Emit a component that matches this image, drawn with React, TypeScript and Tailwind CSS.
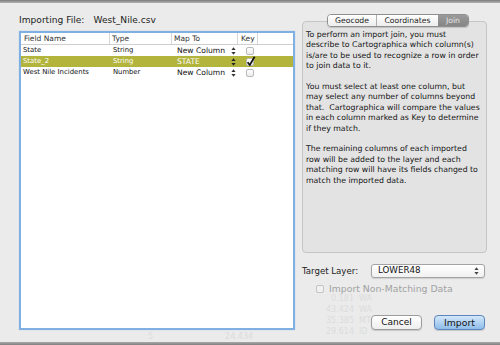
import React from "react";

const UpDown = ({ color = "#333" }: { color?: string }) => (
  <svg width="5" height="8" viewBox="0 0 5 8" className="shrink-0">
    <path d="M2.5 0.3 L4.6 3.1 H0.4 Z M2.5 7.7 L4.6 4.9 H0.4 Z" fill={color} />
  </svg>
);

const Check = ({ checked = false }: { checked?: boolean }) => (
  <div className="relative w-[8px] h-[8px] rounded-[2px] border border-[#b9b9b9] bg-linear-to-b from-white to-[#ececec]">
    {checked && (
      <svg width="10" height="11" viewBox="0 0 10 11" className="absolute -left-[1px] -top-[3px]">
        <path d="M1.6 6.2 L3.8 9 L8.6 0.8" stroke="#111" strokeWidth="1.7" fill="none" />
      </svg>
    )}
  </div>
);

type Row = { name: string; type: string; map: string; key: boolean; sel: boolean };
const rows: Row[] = [
  { name: "State", type: "String", map: "New Column", key: false, sel: false },
  { name: "State_2", type: "String", map: "STATE", key: true, sel: true },
  { name: "West Nile Incidents", type: "Number", map: "New Column", key: false, sel: false },
];

const p1 = [
  "To perform an import join, you must",
  "describe to Cartographica which column(s)",
  "is/are to be used to recognize a row in order",
  "to join data to it.",
];
const p2 = [
  "You must select at least one column, but",
  "may select any number of columns beyond",
  "that.\u00a0 Cartographica will compare the values",
  "in each column marked as Key to determine",
  "if they match.",
];
const p3 = [
  "The remaining columns of each imported",
  "row will be added to the layer and each",
  "matching row will have its fields changed to",
  "match the imported data.",
];

const ghost = [
  ["0.181", "WA", 293],
  ["43.424", "WA", 304],
  ["35.385", "MT", 315],
  ["29.614", "ID", 326],
] as const;

export default function App() {
  return (
    <div className="relative w-[500px] h-[345px] overflow-hidden bg-[#ebebeb] flex flex-col font-['DejaVu_Sans',sans-serif] text-[#1a1a1a]">
      {/* ghost background text seen through the sheet */}
      <div className="absolute inset-0 pointer-events-none text-[8px] text-[#dcdcdc]">
        {ghost.map(([n, s, y]) => (
          <div key={n} className="absolute flex gap-[5px]" style={{ top: y, left: 318 }}>
            <span className="w-[36px] text-right">{n}</span>
            <span>{s}</span>
          </div>
        ))}
        <div className="absolute flex" style={{ top: 331, left: 148 }}>
          <span>5</span>
          <span className="ml-[72px]">24.434</span>
        </div>
      </div>

      <div className="h-[3px] bg-linear-to-b from-[#7c7c7c] to-[#b3b3b3] shrink-0" />

      <div className="relative flex flex-1 pl-[19px]">
        {/* left column */}
        <div className="w-[276px] flex flex-col">
          <div className="mt-[12px] h-[12px] flex items-center text-[9.1px] text-[#222] whitespace-nowrap">
            <span>Importing File:</span>
            <span className="ml-[9px]">West_Nile.csv</span>
          </div>
          <div className="mt-[4px] h-[299px] border-2 border-[#80b0e2] bg-white shadow-[0_0_1px_#a9c9ec] flex flex-col">
            <div className="h-[12px] flex border-b border-[#cfcfcf] text-[7.5px] text-[#333] whitespace-nowrap">
              <div className="w-[89px] pl-[3px] border-r border-[#d6d6d6] flex items-center">Field Name</div>
              <div className="w-[62px] pl-[2px] border-r border-[#d6d6d6] flex items-center">Type</div>
              <div className="w-[66px] pl-[2px] border-r border-[#d6d6d6] flex items-center">Map To</div>
              <div className="w-[20px] pl-[3px] border-r border-[#d6d6d6] flex items-center">Key</div>
              <div className="flex-1" />
            </div>
            {rows.map((r) => (
              <div
                key={r.name}
                className={`h-[11px] flex items-center whitespace-nowrap ${r.sel ? "bg-[#b2b43c] text-white" : "text-[#111]"}`}
              >
                <div className="w-[89px] pl-[2px] text-[6.9px]">{r.name}</div>
                <div className="w-[62px] pl-[3px] text-[6.8px]">{r.type}</div>
                <div className="w-[66px] pl-[5px] pr-[2px] flex items-center justify-between text-[7.6px]">
                  <span>{r.map}</span>
                  <UpDown color={r.sel ? "#222" : "#333"} />
                </div>
                <div className="w-[20px] pl-[8px] flex items-center">
                  <Check checked={r.key} />
                </div>
              </div>
            ))}
          </div>
        </div>

        {/* right column */}
        <div className="ml-[7px] w-[186px] flex flex-col">
          <div className="mt-[11px] relative z-10 flex justify-center">
            <div className="ml-[6px] h-[13px] flex rounded-[4px] border border-[#8f8f8f] overflow-hidden text-[7.7px] shadow-[0_1px_1px_rgba(0,0,0,0.15)]">
              <div className="w-[49px] flex items-center justify-center bg-linear-to-b from-white to-[#ededed] border-r border-[#b0b0b0] text-[#222]">
                Geocode
              </div>
              <div className="w-[61px] flex items-center justify-center bg-linear-to-b from-white to-[#ededed] text-[#222]">
                Coordinates
              </div>
              <div className="w-[30px] flex items-center justify-center bg-linear-to-b from-[#9a9a9a] to-[#858585] text-[#e4e4e4]">
                Join
              </div>
            </div>
          </div>
          <div className="-mt-[6px] w-[185px] h-[232px] rounded-[4px] border border-[#c5c5c5] bg-[#e3e3e3] pt-[8px] pl-[3px] text-[7.8px] leading-[10.4px] text-[#151515] whitespace-nowrap">
            {p1.map((l) => (
              <div key={l}>{l}</div>
            ))}
            <div className="h-[10.4px]" />
            {p2.map((l) => (
              <div key={l}>{l}</div>
            ))}
            <div className="h-[10.4px]" />
            {p3.map((l) => (
              <div key={l}>{l}</div>
            ))}
          </div>

          <div className="mt-[11px] h-[14px] flex items-center">
            <span className="w-[69px] text-[8.6px] text-[#222] whitespace-nowrap">Target Layer:</span>
            <div className="w-[114px] h-[14px] flex items-center justify-between pl-[6px] pr-[5px] rounded-[3px] border border-[#a3a3a3] bg-linear-to-b from-white to-[#f1f1f1] shadow-[0_1px_1px_rgba(0,0,0,0.12)] text-[8.7px] text-[#111]">
              <span>LOWER48</span>
              <UpDown color="#444" />
            </div>
          </div>

          <div className="mt-[6px] h-[10px] pl-[14px] flex items-center gap-[5px]">
            <div className="w-[8px] h-[8px] rounded-[2px] border border-[#c4c4c4] bg-[#f1f1f1]" />
            <span className="text-[9.3px] text-[#a2a2a2] whitespace-nowrap">Import Non-Matching Data</span>
          </div>

          <div className="mt-[21px] h-[15px] pl-[69px] flex gap-[12px]">
            <div className="w-[51px] h-[15px] flex items-center justify-center rounded-[4px] border border-[#9c9c9c] bg-linear-to-b from-white to-[#eeeeee] shadow-[0_1px_1px_rgba(0,0,0,0.15)] text-[9px] text-[#111]">
              Cancel
            </div>
            <div className="w-[51px] h-[15px] flex items-center justify-center rounded-[4px] border border-[#5d86bc] bg-linear-to-b from-[#d4e7fa] to-[#8ebde9] shadow-[0_1px_1px_rgba(0,0,0,0.15)] text-[9.3px] text-[#111]">
              Import
            </div>
          </div>
        </div>
      </div>

      <div className="h-[3px] bg-linear-to-b from-[#a9a9a9] to-[#7f7f7f] shrink-0" />
    </div>
  );
}
